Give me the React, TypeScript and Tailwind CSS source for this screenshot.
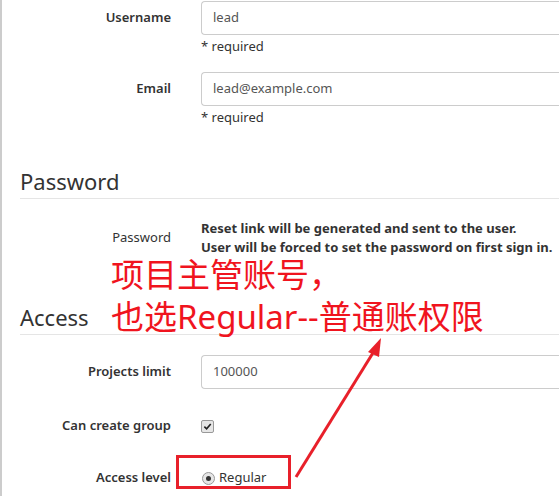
import React from 'react';

const font = { fontFamily: '"Noto Sans", "Open Sans", sans-serif' };

const Label: React.FC<{ text: string; light?: boolean }> = ({ text, light }) => (
  <div className={`w-[169px] shrink-0 text-right text-[13px] text-[#333] ${light ? 'font-normal' : 'font-semibold'}`}>
    {text}
  </div>
);

const TextInput: React.FC<{ value: string }> = ({ value }) => (
  <div className="flex h-[34px] w-full items-center rounded-l-[4px] border border-r-0 border-[#ccc] bg-white pl-[11px] text-[13px] text-[#555]">
    {value}
  </div>
);

const App: React.FC = () => {
  return (
    <div className="relative h-[496px] w-[559px] overflow-hidden bg-white" style={font}>
      <div className="h-full border-l-2 border-[#ccc] pt-[1px]">
        {/* Account */}
        <div className="flex items-start">
          <div className="flex h-[34px] items-center"><Label text="Username" /></div>
          <div className="ml-[30px] flex-1">
            <TextInput value="lead" />
            <p className="h-[22px] text-[13px] leading-[22px] text-[#333]">* required</p>
          </div>
        </div>
        <div className="mt-[15px] flex items-start">
          <div className="flex h-[34px] items-center"><Label text="Email" /></div>
          <div className="ml-[30px] flex-1">
            <TextInput value="lead@example.com" />
            <p className="h-[22px] text-[13px] leading-[22px] text-[#333]">* required</p>
          </div>
        </div>

        {/* Password */}
        <div className="ml-[18px] mt-[41px] border-b border-[#e5e5e5] pb-[5px] text-[22px] leading-[24px] text-[#333]">
          Password
        </div>
        <div className="mt-[20px] flex items-center">
          <Label text="Password" light />
          <div className="ml-[30px] text-[13px] font-bold leading-[19px] text-[#333]">
            <p>Reset link will be generated and sent to the user.</p>
            <p>User will be forced to set the password on first sign in.</p>
          </div>
        </div>

        {/* Access */}
        <div className="ml-[18px] mt-[48px] border-b border-[#e5e5e5] pb-[5px] text-[22px] leading-[24px] text-[#333]">
          Access
        </div>
        <div className="mt-[20px] flex items-center">
          <Label text="Projects limit" />
          <div className="ml-[30px] flex-1"><TextInput value="100000" /></div>
        </div>
        <div className="mt-[25px] flex h-[24px] items-center">
          <Label text="Can create group" />
          <div className="ml-[30px] flex h-[13px] w-[13px] items-center justify-center rounded-[2px] border border-[#999] bg-[#e6e6e6]">
            <svg viewBox="0 0 10 10" className="h-[9px] w-[9px]">
              <path d="M1.5 5.2 L4 7.6 L8.6 2.2" fill="none" stroke="#222" strokeWidth="1.8" />
            </svg>
          </div>
        </div>
        <div className="mt-[28px] flex h-[24px] items-center">
          <Label text="Access level" />
          <div className="ml-[31px] flex items-center gap-[4px]">
            <div className="flex h-[13px] w-[13px] items-center justify-center rounded-full border border-[#999] bg-[#e6e6e6]">
              <div className="h-[5px] w-[5px] rounded-full bg-[#333]" />
            </div>
            <span className="text-[13px] text-[#333]">Regular</span>
          </div>
        </div>
      </div>

      {/* annotation */}
      <div
        className="absolute left-[111px] top-[254px] text-[33px] leading-[42px] text-[#f0141e]"
        style={{ fontFamily: '"Noto Sans", "Noto Sans CJK SC", sans-serif' }}
      >
        <p>项目主管账号，</p>
        <p>也选Regular--普通账权限</p>
      </div>
      <div className="absolute left-[176px] top-[455px] h-[34px] w-[115px] border-[3px] border-[#e8202a]" />
      <svg className="absolute left-0 top-0 h-[496px] w-[559px]" viewBox="0 0 559 496">
        <line x1="296" y1="477" x2="376" y2="348" stroke="#e8202a" strokeWidth="3" />
        <polygon points="381,338 368,352 379,357" fill="#e8202a" />
      </svg>
    </div>
  );
};

export default App;
